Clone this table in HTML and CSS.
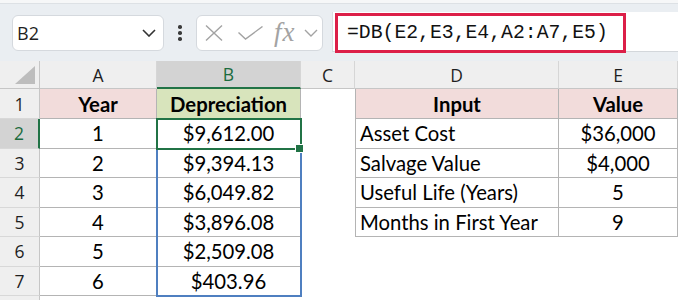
FILE: index.html
```html
<!DOCTYPE html>
<html>
<head>
<meta charset="utf-8">
<link rel="stylesheet" href="styles.css">
</head>
<body>
<div class="app">
  <div class="toolbar">
    <div class="namebox">
      <span class="name">B2</span>
      <svg class="chev" width="14" height="8" viewBox="0 0 14 8"><path d="M1 1 L7 7 L13 1" fill="none" stroke="#333" stroke-width="1.6"/></svg>
    </div>
    <div class="dots"><i></i><i></i><i></i></div>
    <div class="fxbox">
      <svg class="ic-x" width="18" height="16" viewBox="0 0 18 16"><path d="M1 0.5 L17 15.5 M17 0.5 L1 15.5" fill="none" stroke="#a3a3a3" stroke-width="1.4"/></svg>
      <svg class="ic-check" width="25" height="14" viewBox="0 0 25 14"><path d="M0.5 6.5 L7.5 13 L24.5 0.5" fill="none" stroke="#a3a3a3" stroke-width="1.4"/></svg>
      <span class="fx">fx</span>
      <svg class="ic-chev" width="14" height="8" viewBox="0 0 14 8"><path d="M1 1 L7 7 L13 1" fill="none" stroke="#a3a3a3" stroke-width="1.4"/></svg>
    </div>
    <div class="formula">
      <div class="fbox">=DB(E2,E3,E4,A2:A7,E5)</div>
    </div>
  </div>

  <div class="sheet">
    <div class="corner"><svg width="20" height="18" viewBox="0 0 20 18"><path d="M20 0 L20 18 L0 18 Z" fill="#bdbdbd"/></svg></div>
    <div class="ch">A</div>
    <div class="ch ch-sel">B</div>
    <div class="ch">C</div>
    <div class="ch">D</div>
    <div class="ch">E</div>

    <div class="rh">1</div>
    <div class="c b bold pink">Year</div>
    <div class="c b bold green">Depreciation</div>
    <div class="c"></div>
    <div class="c b bl bold pink">Input</div>
    <div class="c b bold pink">Value</div>

    <div class="rh rh-sel">2</div>
    <div class="c b">1</div>
    <div class="c b">$9,612.00</div>
    <div class="c"></div>
    <div class="c b bl left">Asset Cost</div>
    <div class="c b">$36,000</div>

    <div class="rh">3</div>
    <div class="c b">2</div>
    <div class="c b">$9,394.13</div>
    <div class="c"></div>
    <div class="c b bl left">Salvage Value</div>
    <div class="c b">$4,000</div>

    <div class="rh">4</div>
    <div class="c b">3</div>
    <div class="c b">$6,049.82</div>
    <div class="c"></div>
    <div class="c b bl left">Useful Life (Years)</div>
    <div class="c b">5</div>

    <div class="rh">5</div>
    <div class="c b">4</div>
    <div class="c b">$3,896.08</div>
    <div class="c"></div>
    <div class="c b bl left">Months in First Year</div>
    <div class="c b">9</div>

    <div class="rh">6</div>
    <div class="c b">5</div>
    <div class="c b">$2,509.08</div>
    <div class="c"></div>
    <div class="c"></div>
    <div class="c"></div>

    <div class="rh">7</div>
    <div class="c b">6</div>
    <div class="c b">$403.96</div>
    <div class="c"></div>
    <div class="c"></div>
    <div class="c"></div>

    <div class="rh"></div>
    <div class="c"></div>
    <div class="c"></div>
    <div class="c"></div>
    <div class="c"></div>
    <div class="c"></div>

    <div class="range-blue"></div>
    <div class="sel-green"></div>
    <div class="handle"></div>
  </div>
</div>
</body>
</html>
```

FILE: styles.css
```css
* { box-sizing: border-box; }
html, body { margin: 0; padding: 0; background: #ffffff; }
body { width: 678px; height: 300px; overflow: hidden; }

.app { width: 678px; }

.toolbar {
  height: 61px;
  background: #eaeef2;
  border-top: 3px solid #f6f7f8;
  box-shadow: inset 0 1px 0 #dde1e5;
  display: flex;
  align-items: center;
  padding-left: 12px;
}

.namebox {
  width: 152px;
  height: 36px;
  background: #fff;
  border: 1px solid #d5d9de;
  border-radius: 6px;
  display: flex;
  align-items: center;
  justify-content: space-between;
  padding: 0 7px 0 4px;
  margin-top: 1px;
}
.name {
  font-family: "Open Sans", "Noto Sans", sans-serif;
  font-size: 18px;
  color: #1f1f1f;
}

.dots {
  width: 32px;
  display: flex;
  flex-direction: column;
  align-items: center;
  gap: 2.5px;
  margin-top: 2px;
}
.dots i {
  display: block;
  width: 3.5px;
  height: 3.5px;
  border-radius: 50%;
  background: #3a3a3a;
}

.fxbox {
  width: 127px;
  height: 36px;
  background: #fff;
  border: 1px solid #d5d9de;
  border-radius: 6px;
  display: flex;
  align-items: center;
  margin-top: 1px;
}
.ic-x { margin-left: 8px; }
.ic-check { margin-left: 15px; }
.fx {
  margin-left: 11px;
  font-family: "Liberation Serif", "DejaVu Serif", serif;
  font-style: italic;
  font-size: 27px;
  color: #a3a3a3;
  line-height: 1;
  width: 22px;
  letter-spacing: 1px;
}
.ic-chev { margin-left: 8px; }

.formula {
  margin-left: 9px;
  flex: 1;
  height: 40px;
  background: #fff;
  border-left: 1px solid #dadee2;
  border-bottom: 1px solid #d3d7db;
  display: flex;
  align-items: flex-start;
}
.fbox {
  margin-left: 2px;
  margin-top: 1px;
  width: 291px;
  height: 40px;
  border: 3px solid #dc1f48;
  padding-left: 9px;
  display: flex;
  align-items: center;
  font-family: "Liberation Mono", "DejaVu Sans Mono", monospace;
  font-size: 19.75px;
  color: #111;
  white-space: nowrap;
}

.sheet {
  position: relative;
  display: grid;
  grid-template-columns: 40px 117px 144px 54px 204px 119px;
  grid-template-rows: 28px 30px repeat(6, 29.5px) 10px;
}

.corner {
  background: #efefef;
  border-right: 1px solid #c6c6c6;
  border-bottom: 1px solid #c6c6c6;
  display: flex;
  align-items: flex-end;
  justify-content: flex-end;
  padding: 0 4px 4px 0;
}

.ch {
  background: #efefef;
  border-right: 1px solid #d6d6d6;
  border-bottom: 1px solid #c6c6c6;
  display: flex;
  align-items: center;
  justify-content: center;
  font-family: "Open Sans", "Noto Sans", sans-serif;
  font-size: 17.5px;
  color: #1f1f1f;
}
.ch-sel {
  background: #d3d3d3;
  color: #1b6b3e;
  border-bottom: 2px solid #217346;
}

.rh {
  background: #efefef;
  border-right: 1px solid #c6c6c6;
  border-bottom: 1px solid #d8d8d8;
  display: flex;
  align-items: center;
  justify-content: center;
  font-family: "Open Sans", "Noto Sans", sans-serif;
  font-size: 17.5px;
  color: #1f1f1f;
}
.rh-sel {
  background: #d3d3d3;
  color: #1b6b3e;
  border-right: 2px solid #217346;
}

.c {
  display: flex;
  align-items: center;
  justify-content: center;
  font-family: "Lato", "Open Sans", sans-serif;
  font-size: 20.3px;
  color: #000;
  white-space: nowrap;
  background: #fff;
}
.b {
  border-right: 1px solid #b4b4b4;
  border-bottom: 1px solid #b4b4b4;
}
.bl { border-left: 1px solid #b4b4b4; }
.left { justify-content: flex-start; padding-left: 4px; }
.bold { font-weight: 700; }
.pink { background: #f2dcdb; }
.green { background: #d8e4bc; }

.range-blue {
  position: absolute;
  left: 156px;
  top: 57px;
  width: 146px;
  height: 179px;
  border: 2px solid #4f7fc0;
}
.sel-green {
  position: absolute;
  left: 156px;
  top: 57px;
  width: 146px;
  height: 32px;
  border: 2px solid #217346;
}
.handle {
  position: absolute;
  left: 296px;
  top: 84px;
  width: 7px;
  height: 7px;
  background: #217346;
  outline: 1px solid #fff;
}
```
